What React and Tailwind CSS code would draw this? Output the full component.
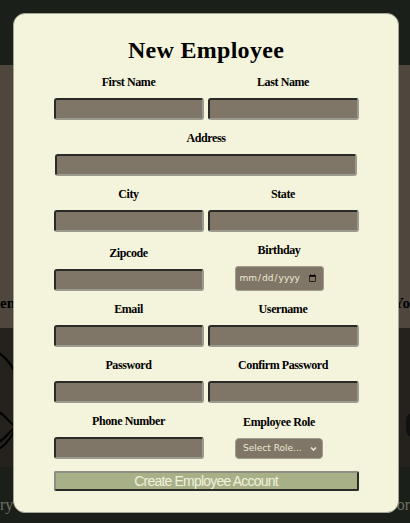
const serif = "font-['Liberation_Serif',serif]";
const label = `${serif} text-[12px] leading-[16px] font-bold tracking-[-0.4px] text-black mb-[8px] text-center`;
const field =
  "h-[22px] w-full bg-[#7f7667] rounded-[3px] border-2 border-[#2a2a26] border-r-[#9c9a8e] border-b-[#9c9a8e] outline-none";

const Field = ({ name, type = "text" }) => (
  <div className="flex flex-col items-center">
    <label className={label}>{name}</label>
    <input type={type} className={field} />
  </div>
);

const NewEmployee = () => {
  return (
    <div className="relative w-[410px] h-[523px] overflow-hidden bg-[#1a2019]">
      {/* pagina detras del modal */}
      <div className="flex flex-col">
        <div className="h-[65px] bg-[#1a2019]"></div>
        <div className="h-[263px] bg-[#4f473d] flex items-end justify-between pb-[14px]">
          <span className={`${serif} text-[15px] font-bold text-black`}>emi</span>
          <span className={`${serif} text-[15px] font-bold text-black`}>Yo</span>
        </div>
        <div className="relative h-[139px] bg-[#25221d] overflow-hidden">
          <div className="absolute left-[-62px] top-[18px] w-[80px] h-[110px] rounded-full border-2 border-black"></div>
          <div className="absolute left-[-10px] top-[88px] w-[22px] h-[22px] rotate-45 border-2 border-black"></div>
          <div className="absolute right-[-10px] top-[85px] w-[14px] h-[24px] rounded-full bg-[#111]"></div>
        </div>
        <div className="h-[56px] bg-[#1a2019] flex items-end justify-between pb-[6px]">
          <span className={`${serif} text-[16px] text-[#6f6f62]`}>ry</span>
          <span className={`${serif} text-[16px] text-[#6f6f62]`}>or</span>
        </div>
      </div>

      {/* Modal */}
      <div className="absolute left-[13px] top-[13px] w-[386px] h-[500px] rounded-[12px] bg-[#f4f4dc] border border-[#a5a596] flex flex-col items-center pt-[22px]">
        <h1 className={`${serif} text-[24px] leading-[28px] font-bold tracking-[0.3px] text-black`}>New Employee</h1>

        <form className="w-[305px] mt-[10px] grid grid-cols-[150px_151px] gap-x-[4px] gap-y-[10px] items-end">
          <Field name="First Name" />
          <Field name="Last Name" />

          <div className="col-span-2 flex flex-col items-center">
            <label className={label}>Address</label>
            <input type="text" className={`${field} !w-[302px]`} />
          </div>

          <Field name="City" />
          <Field name="State" />

          <Field name="Zipcode" />
          <div className="flex flex-col items-center pr-[8px]">
            <label className={label}>Birthday</label>
            <input
              type="date"
              className="w-[89px] h-[25px] bg-[#7f7667] text-[#f0ecd0] text-[9px] font-['DejaVu_Sans',sans-serif] rounded-[3px] border border-[#a09c8e] pl-[3px] pr-[4px] outline-none"
            />
          </div>

          <Field name="Email" />
          <Field name="Username" />

          <Field name="Password" type="password" />
          <Field name="Confirm Password" type="password" />

          <Field name="Phone Number" />
          <div className="flex flex-col items-center pr-[8px]">
            <label className={label}>Employee Role</label>
            <div className="relative flex">
              <select className="appearance-none w-[88px] h-[21px] bg-[#7f7667] text-[#ebe8d2] text-[9px] leading-[19px] py-0 font-['DejaVu_Sans',sans-serif] rounded-[4px] border border-[#a09c8e] pl-[7px] pr-[14px] outline-none">
                <option>Select Role...</option>
                <option>Manager</option>
                <option>Employee</option>
              </select>
              <svg
                className="absolute right-[6px] top-[8px] pointer-events-none"
                width="7"
                height="6"
                viewBox="0 0 7 6"
                fill="none"
                stroke="#ebe8d2"
                strokeWidth="1.6"
              >
                <path d="M1 1.5 L3.5 4 L6 1.5" />
              </svg>
            </div>
          </div>

          <button
            type="button"
            className="col-span-2 mt-[2px] h-[20px] w-full bg-[#a8b088] rounded-[2px] border-2 border-[#2a2a26] border-t-[#8e8e84] border-l-[#8e8e84] font-['Liberation_Sans',sans-serif] text-[14px] leading-[16px] tracking-[-0.8px] text-[#f0f0dc]"
          >
            Create Employee Account
          </button>
        </form>
      </div>
    </div>
  );
};

export default function App() {
  return <NewEmployee />;
}
